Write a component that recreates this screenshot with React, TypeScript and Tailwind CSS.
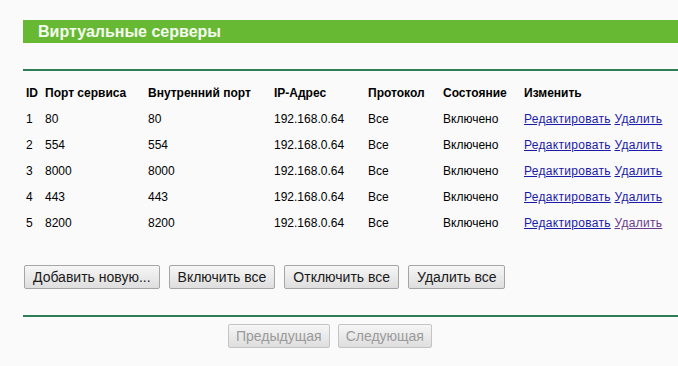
import React from "react";

const rows = [
  { id: 1, port: "80", inner: "80" },
  { id: 2, port: "554", inner: "554" },
  { id: 3, port: "8000", inner: "8000" },
  { id: 4, port: "443", inner: "443" },
  { id: 5, port: "8200", inner: "8200" },
];

const cols = "grid grid-cols-[19px_103px_126px_94px_75px_81px_1fr]";

const Btn = ({ children, disabled }: { children: React.ReactNode; disabled?: boolean }) => (
  <button
    disabled={disabled}
    className={
      "h-[24px] border rounded-[2px] bg-gradient-to-b from-[#f6f6f6] to-[#dedede] text-[14px] leading-none " +
      (disabled ? "px-[7px] text-[#9a9a9a] border-[#c4c4c4]" : "px-[8px] text-[#1a1a1a] border-[#a5a5a5]")
    }
  >
    {children}
  </button>
);

export default function App() {
  return (
    <div className="w-[678px] h-[366px] overflow-hidden bg-[#fafafa] pl-[23px] pt-[20px] font-['Liberation_Sans',Arial,sans-serif] text-[12px] text-black">
      {/* Title bar */}
      <div className="h-[23px] bg-[#67b934] pl-[15px] flex items-center text-[16px] font-bold text-[#f4fbef]">
        Виртуальные серверы
      </div>

      <div className="mt-[26px] h-[2px] bg-[#2d7d58]" />

      {/* Table */}
      <div className="mt-[8px]">
        <div className={cols + " h-[27px] items-center font-bold pl-[3px]"}>
          <div>ID</div>
          <div>Порт сервиса</div>
          <div>Внутренний порт</div>
          <div>IP-Адрес</div>
          <div>Протокол</div>
          <div>Состояние</div>
          <div>Изменить</div>
        </div>
        {rows.map((r) => (
          <div key={r.id} className={cols + " h-[26px] items-center pl-[3px]"}>
            <div>{r.id}</div>
            <div>{r.port}</div>
            <div>{r.inner}</div>
            <div>192.168.0.64</div>
            <div>Все</div>
            <div>Включено</div>
            <div className="whitespace-nowrap tracking-[0.3px]">
              <a href="#" className="text-[#1a1aa8] underline">Редактировать</a>{" "}
              <a href="#" className={r.id === 5 ? "text-[#6a3b8e] underline" : "text-[#1a1aa8] underline"}>
                Удалить
              </a>
            </div>
          </div>
        ))}
      </div>

      {/* Actions */}
      <div className="mt-[29px] flex gap-[9px] pl-px">
        <Btn>Добавить новую...</Btn>
        <Btn>Включить все</Btn>
        <Btn>Отключить все</Btn>
        <Btn>Удалить все</Btn>
      </div>

      <div className="mt-[26px] h-[2px] bg-[#2d7d58]" />

      <div className="mt-[7px] flex gap-[8px] pl-[205px]">
        <Btn disabled>Предыдущая</Btn>
        <Btn disabled>Следующая</Btn>
      </div>
    </div>
  );
}
